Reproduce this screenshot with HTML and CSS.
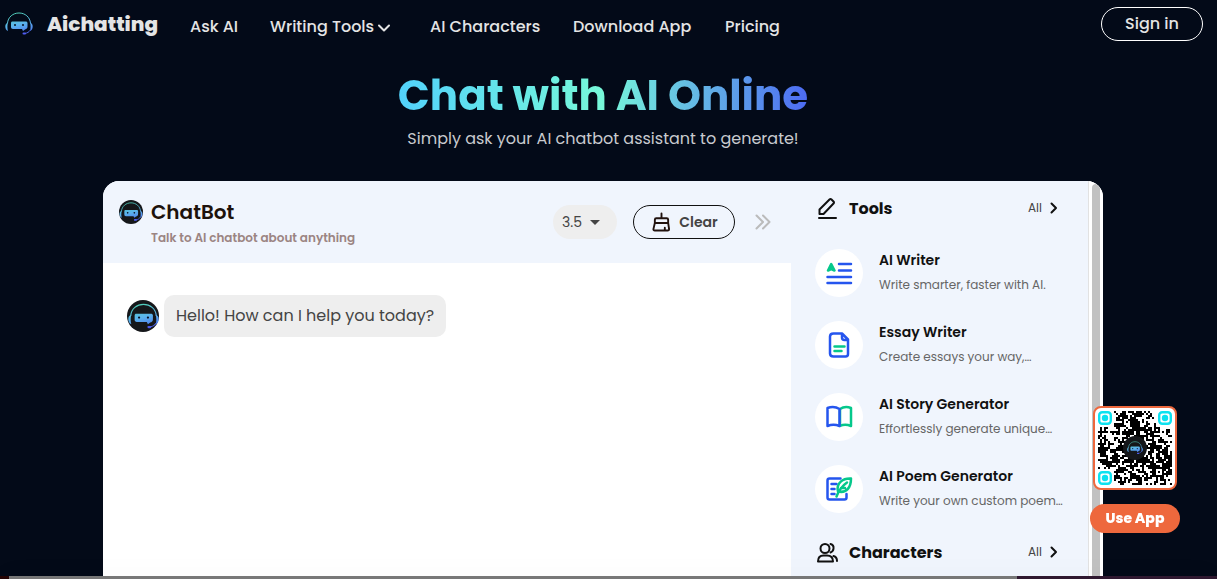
FILE: index.html
```html
<!DOCTYPE html>
<html lang="en">
<head>
<meta charset="utf-8">
<title>Aichatting</title>
<link rel="stylesheet" href="styles.css">
</head>
<body>
<svg class="defs" aria-hidden="true">
  <defs>
    <linearGradient id="bot" gradientUnits="userSpaceOnUse" x1="12" y1="0" x2="18" y2="24">
      <stop offset="0" stop-color="#4fcfb4"/><stop offset=".5" stop-color="#5bb4ec"/><stop offset="1" stop-color="#4a6cf0"/>
    </linearGradient>
    <symbol id="robot" viewBox="0 0 28 24">
      <path d="M2.500 11C3 5 8 1 14 1s11 4 11.500 10" fill="none" stroke="url(#bot)" stroke-width="1"/>
      <path d="M3 10.500C.8 11 .3 13 .3 14.500S1 18.500 3 19c-.8-2.500-.8-6 0-8.500zM25 10.500c2.200.5 2.700 2.500 2.700 4S27 18.500 25 19c.8-2.500.8-6 0-8.500z" fill="url(#bot)"/>
      <path d="M7.500 9.500h13c1.300 0 2 .6 2 1.500v3.500c0 2-1 2.500-2.500 3l-2 1.500-1-2H8c-1.300 0-2-.8-2-2v-4c0-.9.5-1.500 1.500-1.500z" fill="url(#bot)"/>
      <circle cx="10" cy="13" r="1" fill="#071022"/><circle cx="18" cy="13" r="1" fill="#071022"/>
      <path d="M25 18.500c-1 1.500-2.500 2.500-5 3" fill="none" stroke="#5068ee" stroke-width="1"/>
      <rect x="17.500" y="20.500" width="3.500" height="2" rx="1" fill="#4f5cf0"/>
    </symbol>
  </defs>
</svg>

<div class="page">
  <header class="topbar">
    <a class="brand" href="#"><svg class="brand-logo"><use href="#robot"/></svg><span>Aichatting</span></a>
    <nav class="nav">
      <a href="#">Ask AI</a>
      <a href="#">Writing Tools <svg class="caret" viewBox="0 0 12 8"><path d="M1 1.500l5 5 5-5"/></svg></a>
      <a href="#">AI Characters</a>
      <a href="#">Download App</a>
      <a href="#">Pricing</a>
    </nav>
    <button class="signin" type="button">Sign in</button>
  </header>

  <main class="content">
    <h1 class="title">Chat with AI Online</h1>
    <p class="subtitle">Simply ask your AI chatbot assistant to generate!</p>

    <div class="panel">
      <section class="chat">
        <div class="chat-head">
          <span class="avatar avatar-small"><svg><use href="#robot"/></svg></span>
          <div class="chat-name">
            <h2>ChatBot</h2>
            <p>Talk to AI chatbot about anything</p>
          </div>
          <div class="version">
            <select aria-label="Model version"><option>3.5</option></select>
            <svg viewBox="0 0 10 5"><path d="M0 0h10L5 5z"/></svg>
          </div>
          <button class="clear" type="button">
            <svg viewBox="0 0 20 20"><path d="M10 1v5M3 11V7.500Q3 6 4.500 6h11Q17 6 17 7.500V11zM3 11L1.500 17.500Q1.300 19 3 19h13.500q1.500 0 1.500-1.500L17 11M13.500 16v2.500"/></svg>
            Clear
          </button>
          <button class="collapse" type="button" aria-label="Collapse sidebar">
            <svg viewBox="0 0 16 16"><path d="M1.500 1.500L8 8l-6.500 6.500M8 1.500L14.500 8 8 14.500"/></svg>
          </button>
        </div>
        <div class="messages">
          <span class="avatar"><svg><use href="#robot"/></svg></span>
          <p class="bubble">Hello! How can I help you today?</p>
        </div>
      </section>

      <aside class="sidebar">
        <div class="side-head">
          <svg class="side-icon" viewBox="0 0 22 22"><path d="M3 21h17M3.500 17v-4.500L13.500 2.500q1-1 2 0l2 2q1 1 0 2L7.500 17z"/></svg>
          <h3>Tools</h3>
          <a href="#">All <svg viewBox="0 0 8 12"><path d="M1.500 1.500L6 6l-4.500 4.500"/></svg></a>
        </div>
        <ul class="tools">
          <li><a href="#">
            <span class="tool-icon"><svg viewBox="0 0 28 28"><g stroke="#2555ee"><path d="M14 5h12M14 11.500h12M2.500 18h23.500M2.500 24h23.500"/></g><path d="M3 11.500L6.200 5l3.300 6.500-3.300-1.500z" fill="#05c88b" stroke="#05c88b"/></svg></span>
            <span class="tool-text"><strong>AI Writer</strong><span>Write smarter, faster with AI.</span></span>
          </a></li>
          <li><a href="#">
            <span class="tool-icon"><svg viewBox="0 0 28 28"><path d="M8.500 2.500H17l6 6V23q0 2.500-2.500 2.500h-12Q5 25.500 5 22.500V5.500q0-3 3.500-3zM17 3v3.500Q17 9 19.500 9H23" stroke="#2555ee"/><path d="M9.500 15.500h10M9.500 20h7" stroke="#05c88b"/></svg></span>
            <span class="tool-text"><strong>Essay Writer</strong><span>Create essays your way,…</span></span>
          </a></li>
          <li><a href="#">
            <span class="tool-icon"><svg viewBox="0 0 28 28"><path d="M15 23V6q5-3.500 11-1v18q-6-2.500-11 0" stroke="#05c88b"/><path d="M14.500 23V6Q9 2.500 2.500 5v18q6-2.500 12 0z" stroke="#2555ee"/></svg></span>
            <span class="tool-text"><strong>AI Story Generator</strong><span>Effortlessly generate unique…</span></span>
          </a></li>
          <li><a href="#">
            <span class="tool-icon"><svg viewBox="0 0 28 28"><path d="M15.500 3.500h-11q-2 0-2 2v17q0 2 2 2h15q2 0 2-2V19M6.500 9h5M6.500 14h3M6.500 19h3" stroke="#2555ee"/><path d="M11.500 21.500C14 15 17 11 22 7.500M13 16.500C11 8 18 3 26 3.500 26 12 22 18.500 13 16.500zM16 13h4" stroke="#05c88b"/></svg></span>
            <span class="tool-text"><strong>AI Poem Generator</strong><span>Write your own custom poem…</span></span>
          </a></li>
        </ul>
        <div class="side-head">
          <svg class="side-icon" viewBox="0 0 22 22"><circle cx="9" cy="7.500" r="4.500"/><path d="M2 20.500q0-6 5.500-6h3.500q6 0 6 6zM14.500 3Q18 4 17.500 7.500q-.2 3-3 4M17.500 15Q21 16 21 20"/></svg>
          <h3>Characters</h3>
          <a href="#">All <svg viewBox="0 0 8 12"><path d="M1.500 1.500L6 6l-4.500 4.500"/></svg></a>
        </div>
      </aside>
      <div class="gutter"><div class="thumb"></div></div>
    </div>
  </main>

  <footer class="strip"><span></span><span></span><span></span></footer>
</div>

<div class="app-widget">
  <div class="qr">
    <svg id="qr" viewBox="0 0 37 37" shape-rendering="crispEdges" role="img" aria-label="App QR code"></svg>
    <span class="avatar qr-logo"><svg><use href="#robot"/></svg></span>
  </div>
  <a class="use-app" href="#">Use App</a>
</div>
<script src="qr.js"></script>
</body>
</html>
```

FILE: styles.css
```css
* { box-sizing: border-box; }

body {
  margin: 0;
  background: #030a18;
  color: #e4e4e4;
  font-family: Poppins, Inter, "Liberation Sans", sans-serif;
  font-size: 16px;
}

h1, h2, h3, p, ul { margin: 0; padding: 0; }
ul { list-style: none; }
a { color: inherit; text-decoration: none; }
button, select { font: inherit; cursor: pointer; }
svg { fill: none; stroke-linecap: round; stroke-linejoin: round; }

.defs { position: absolute; width: 0; height: 0; }

.page {
  display: grid;
  grid-template-rows: auto 1fr auto;
  height: 100vh;
  overflow: hidden;
}

.topbar {
  display: flex;
  align-items: center;
  height: 48px;
  padding: 0 14px 0 5px;
  font-weight: 500;
}
.brand {
  display: flex;
  align-items: center;
  gap: 14px;
  width: 185px;
  font-size: 20px;
  font-weight: 800;
}
.brand-logo { width: 28px; height: 24px; }
.nav {
  display: grid;
  grid-template-columns: 80px 160px 143px 152px auto;
  padding-top: 4px;
  white-space: nowrap;
}
.caret {
  width: 12px;
  height: 8px;
  stroke: currentColor;
  stroke-width: 2;
}
.signin {
  width: 102px;
  height: 34px;
  margin-left: auto;
  padding: 0 0 2px;
  border: 1px solid #fff;
  border-radius: 17px;
  background: none;
  color: inherit;
}

.content {
  display: flex;
  flex-direction: column;
  min-height: 0;
  padding-right: 11px;
}
.title {
  align-self: center;
  margin-top: 20px;
  background: linear-gradient(90deg, #52d2fb, #77f8d9 50%, #4d6bf3);
  background-clip: text;
  color: transparent;
  font-size: 42px;
  font-weight: 700;
  line-height: 56px;
}
.subtitle {
  align-self: center;
  margin-top: 3px;
  color: #c9cbcf;
  line-height: 24px;
}

.panel {
  display: flex;
  flex: 1;
  align-self: center;
  width: 100%;
  max-width: 1000px;
  min-height: 0;
  margin-top: 30px;
  overflow: hidden;
  border-radius: 16px 16px 0 0;
  background: #fff;
  color: #111;
}
.chat { flex: 1; }
.chat-head {
  display: flex;
  align-items: center;
  height: 82px;
  padding: 0 20px 0 16px;
  background: #f0f5fd;
}
.avatar {
  display: grid;
  flex: none;
  place-items: center;
  width: 32px;
  height: 32px;
  border-radius: 50%;
  background: #15171a;
}
.avatar svg { width: 31px; height: 27px; }
.avatar-small {
  align-self: flex-start;
  width: 24px;
  height: 24px;
  margin-top: 19px;
}
.avatar-small svg { width: 24px; height: 20px; }
.chat-name { margin: 0 auto 0 8px; padding-top: 5px; }
.chat-name h2 {
  color: #1d120c;
  font-size: 20px;
  font-weight: 600;
  line-height: 26px;
}
.chat-name p {
  color: #9b8482;
  font-size: 12px;
  font-weight: 600;
  line-height: 26px;
}
.version {
  display: grid;
  align-items: center;
}
.version > * { grid-area: 1 / 1; }
.version select {
  width: 64px;
  height: 34px;
  padding: 0 9px;
  border: 0;
  border-radius: 17px;
  appearance: none;
  background: #eee;
  color: #444;
  font-size: 14px;
}
.version svg {
  justify-self: end;
  width: 10px;
  height: 5px;
  margin-right: 17px;
  fill: #444;
  pointer-events: none;
}
.clear {
  display: flex;
  align-items: center;
  justify-content: center;
  gap: 8px;
  width: 102px;
  height: 34px;
  margin: 0 20px 0 16px;
  padding: 0 0 0 2px;
  border: 1px solid #111;
  border-radius: 17px;
  background: none;
  color: #444;
  font-size: 14px;
  font-weight: 600;
}
.clear svg { width: 19px; height: 20px; stroke: #21120e; stroke-width: 2; }
.collapse { display: flex; padding: 0; border: 0; background: none; }
.collapse svg { width: 16px; height: 16px; stroke: #bbb; stroke-width: 2; }

.messages {
  display: flex;
  align-items: center;
  gap: 5px;
  padding: 32px 24px;
}
.bubble {
  padding: 9px 12px;
  border-radius: 10px;
  background: #eee;
  color: #444;
  line-height: 24px;
}

.sidebar {
  width: 298px;
  padding: 11px 24px 0;
  border-right: 1px solid #e2e2e2;
  background: #f0f5fd;
}
.side-head { display: flex; align-items: center; height: 32px; }
.side-icon { width: 22px; height: 22px; margin: 0 11px 0 1px; stroke: #111; stroke-width: 2; }
.side-head h3 { font-size: 16px; font-weight: 700; }
.side-head a {
  display: flex;
  align-items: center;
  gap: 8px;
  margin: 0 6px 0 auto;
  color: #444;
  font-size: 12px;
}
.side-head a svg { width: 8px; height: 12px; stroke: #111; stroke-width: 2; }
.tools { padding: 13px 0 11px; }
.tools a { display: flex; align-items: center; gap: 16px; height: 72px; }
.tool-icon {
  display: grid;
  flex: none;
  place-items: center;
  width: 48px;
  height: 48px;
  border-radius: 50%;
  background: #fff;
}
.tool-icon svg { width: 28px; height: 28px; stroke-width: 2.500; }
.tool-text {
  display: grid;
  gap: 1px;
  padding-bottom: 2px;
  color: #666;
  font-size: 12px;
  line-height: 24px;
  white-space: nowrap;
}
.tool-text strong { color: #111; font-size: 14px; font-weight: 600; }

.gutter { width: 14px; padding: 3px 3px 0; background: #fff; }
.thumb { height: 100%; border-radius: 4px 4px 0 0; background: #c1c1c1; }

.strip {
  position: relative;
  display: grid;
  grid-template-columns: 9px 1fr 200px;
  height: 3px;
  background: #777;
  box-shadow: 0 0 24px rgba(0, 0, 0, .1);
}
.strip span:first-child { background: #250404; }
.strip span:last-child { background: #2f1830; }

.app-widget {
  position: fixed;
  right: 37px;
  bottom: 46px;
  display: flex;
  flex-direction: column;
  align-items: center;
  gap: 14px;
}
.qr {
  display: grid;
  place-items: center;
  width: 84px;
  height: 84px;
  border: 2px solid #ee683d;
  border-radius: 8px;
  background: #fff;
}
.qr > * { grid-area: 1 / 1; }
#qr { width: 74px; height: 74px; }
.qr-logo { width: 24px; height: 24px; }
.qr-logo svg { width: 16px; height: 14px; }
.use-app {
  width: 90px;
  border-radius: 15px;
  background: #ee683d;
  color: #fff;
  font-size: 14px;
  font-weight: 800;
  line-height: 29px;
  text-align: center;
}
```

FILE: qr.js
```js
const svg = document.getElementById("qr");
const size = 37;
const inFinder = (x, y) => (x < 8 || x > 28) && y < 8 || x < 8 && y > 28;

// Deterministic module pattern; neighbours tend to share a colour.
let seed = 7321;
const next = () => (seed = (seed * 1103515245 + 12345) % 2147483648) / 2147483648;

let d = "";
let above = [];
for (let y = 0; y < size; y++) {
  const row = [];
  for (let x = 0; x < size; x++) {
    const pull = (row[x - 1] ? 0.08 : -0.08) + (above[x] ? 0.08 : -0.08);
    const dark = next() < 0.53 + pull;
    row.push(dark);
    if (dark && !inFinder(x, y)) d += `M${x} ${y}h1v1h-1z`;
  }
  above = row;
}
let markup = `<path d="${d}" fill="#000"/>`;
for (const [x, y] of [[0, 0], [30, 0], [0, 30]]) {
  markup += `<g shape-rendering="auto"><rect x="${x + 0.6}" y="${y + 0.6}" width="5.8" height="5.8" rx="1.5" fill="none" stroke="#0ce2f0" stroke-width="1.2"/><circle cx="${x + 3.5}" cy="${y + 3.5}" r="1.6" fill="#0ce2f0"/></g>`;
}
markup += `<rect x="28" y="28" width="5" height="5" fill="#000"/><rect x="29" y="29" width="3" height="3" fill="#fff"/><rect x="30" y="30" width="1" height="1" fill="#000"/>`;
svg.innerHTML = markup;
```
